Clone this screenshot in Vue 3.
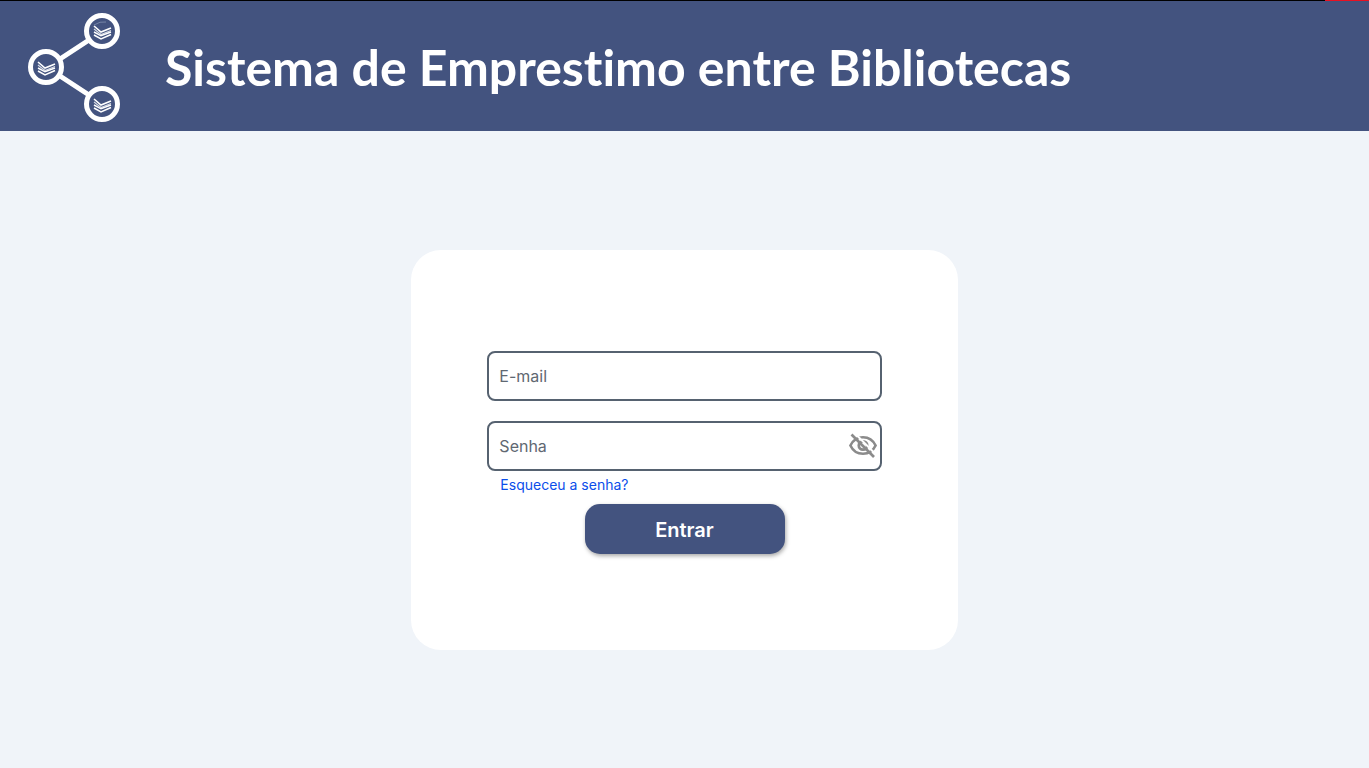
<script setup>
import { ref } from 'vue'

const email = ref('')
const password = ref('')
const visible = ref(false)

const nodes = [
  { x: 102, y: 31 },
  { x: 46, y: 67 },
  { x: 102, y: 104 },
]
</script>

<template>
  <div class="page">
    <div class="strip"><span class="strip-end"></span></div>
    <header class="header">
      <svg class="logo" viewBox="28 13 92 109" aria-hidden="true">
        <path d="M89 40 60 59M60 76 89 95" stroke="#fff" stroke-width="5" fill="none" />
        <g v-for="node in nodes" :key="node.y" :transform="`translate(${node.x} ${node.y})`" fill="none">
          <circle r="15.5" stroke="#fff" stroke-width="5" />
          <path d="M-8-5-1 1 9-3" stroke="#fff" stroke-width="1.6" />
          <path d="M-8-2-1 3.500 9-.5" stroke="#d5dae5" stroke-width="1.2" />
          <path d="M-8 1-1 4.800 9 1M-8 4-1 8 9 3.500" stroke="#fff" stroke-width="1.5" />
        </g>
        <path d="M94 25q6-4 12-3" stroke="#7584a6" stroke-width="1" fill="none" />
      </svg>
      <h1 class="title">Sistema de Emprestimo entre Bibliotecas</h1>
    </header>
    <main class="main">
      <form class="card" @submit.prevent>
        <div class="fields">
          <input v-model="email" class="field" type="email" placeholder="E-mail" aria-label="E-mail" />
          <div class="password">
            <input v-model="password" class="field" :type="visible ? 'text' : 'password'" placeholder="Senha" aria-label="Senha" />
            <button class="toggle" type="button" aria-label="Mostrar senha" @click="visible = !visible">
              <svg viewBox="0 0 30 30" fill="none">
                <path d="M2.400 14.500C5 9 10 6.200 15 6.200S25 9 27.600 14.500C25 20 20 22.800 15 22.800S5 20 2.400 14.500Z" stroke="#8b8b8b" stroke-width="2.600" />
                <circle cx="15" cy="14.500" r="4.200" stroke="#8b8b8b" stroke-width="2.800" />
                <path d="M6.500 2 28 23.500" stroke="#fff" stroke-width="2" />
                <path d="m3.500 3.500 22.500 22.500" stroke="#8b8b8b" stroke-width="2.600" />
              </svg>
            </button>
          </div>
          <a class="forgot" href="#">Esqueceu a senha?</a>
        </div>
        <button class="submit" type="submit">Entrar</button>
      </form>
    </main>
  </div>
</template>

<style>
body {
  margin: 0;
}
</style>

<style scoped>
.page {
  display: flex;
  flex-direction: column;
  min-height: 100vh;
  background: #f0f4f9;
  font-family: Lato, "Open Sans", sans-serif;
}
.page * {
  box-sizing: border-box;
}
.strip {
  display: flex;
  justify-content: flex-end;
  height: 1px;
  background: #000;
}
.strip-end {
  width: 44px;
  background: #e81123;
}
.header {
  display: flex;
  align-items: center;
  gap: 45px;
  height: 130px;
  padding: 2px 28px 0;
  background: #43537f;
}
.logo {
  flex: none;
  width: 92px;
  height: 109px;
}
.title {
  margin: 0;
  color: #fff;
  font-size: 50px;
  font-weight: 700;
  font-variant-ligatures: none;
  line-height: 60px;
  white-space: nowrap;
}
.main {
  display: flex;
  flex: 1;
  align-items: center;
  justify-content: center;
}
.card {
  display: flex;
  flex-direction: column;
  align-items: center;
  width: 40%;
  min-height: 400px;
  padding-top: 101px;
  border-radius: 30px;
  background: #fff;
}
.fields {
  display: flex;
  flex-direction: column;
  align-items: flex-start;
  gap: 20px;
  width: 72%;
}
.field {
  width: 100%;
  height: 50px;
  padding: 0 10px;
  border: 2px solid #566270;
  border-radius: 8px;
  outline: none;
  background: #fff;
  color: #566270;
  font-family: Inter, sans-serif;
  font-size: 16px;
}
.field::placeholder {
  color: #5f6872;
  opacity: 1;
}
.password {
  position: relative;
  width: 100%;
}
.toggle {
  position: absolute;
  top: 10px;
  right: 4px;
  width: 30px;
  height: 30px;
  padding: 0;
  border: 0;
  background: none;
}
.toggle svg {
  display: block;
  width: 100%;
}
.forgot {
  margin: -16px 0 0 13px;
  color: #0b4eea;
  font-size: 14px;
  font-weight: 400;
  font-family: Inter, sans-serif;
  line-height: 20px;
  text-decoration: none;
}
.submit {
  width: 200px;
  height: 50px;
  margin-top: 9px;
  padding: 2px 0 0;
  border: 0;
  border-radius: 15px;
  background: #43537f;
  box-shadow: 1px 2px 4px rgba(0, 0, 0, 0.35);
  color: #fff;
  font-family: Inter, sans-serif;
  font-size: 20px;
  font-weight: 600;
}
</style>
